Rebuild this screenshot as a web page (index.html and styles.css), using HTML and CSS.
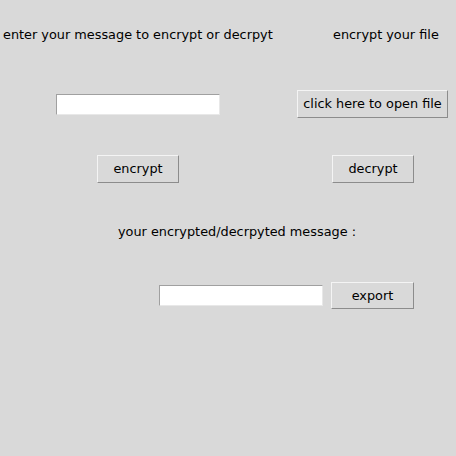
FILE: index.html
```html
<!DOCTYPE html>
<html>
<head>
<meta charset="utf-8">
<link rel="stylesheet" href="styles.css">
</head>
<body>
<div class="window">
  <div class="row row-labels">
    <span class="label label-msg">enter your message to encrypt or decrpyt</span>
    <span class="label label-file">encrypt your file</span>
  </div>
  <div class="row row-input">
    <input class="entry entry-msg" type="text">
    <button class="btn btn-open">click here to open file</button>
  </div>
  <div class="row row-actions">
    <button class="btn btn-small btn-encrypt">encrypt</button>
    <button class="btn btn-small btn-decrypt">decrypt</button>
  </div>
  <div class="row row-result-label">
    <span class="label label-result">your encrypted/decrpyted message :</span>
  </div>
  <div class="row row-output">
    <input class="entry entry-out" type="text">
    <button class="btn btn-small btn-export">export</button>
  </div>
</div>
</body>
</html>
```
FILE: styles.css
```css
html, body {
  margin: 0;
  padding: 0;
  background: #d9d9d9;
}
body {
  width: 456px;
  height: 456px;
  font-family: "DejaVu Sans", sans-serif;
  font-size: 12.85px;
  color: #000;
}
.window {
  padding-top: 27px;
}
.row {
  display: flex;
  align-items: center;
}
.label {
  line-height: 16px;
  white-space: nowrap;
}
.row-labels { height: 16px; }
.label-msg { width: 330px; padding-left: 3px; box-sizing: border-box; }
.label-file { margin-left: 3px; }

.row-input { margin-top: 47px; height: 28px; }
.entry {
  box-sizing: border-box;
  width: 164px;
  height: 21px;
  margin: 0;
  padding: 0 2px;
  background: #fff;
  border: 1px solid;
  border-color: #a0a0a0 #e8e8e8 #e8e8e8 #a0a0a0;
  font: inherit;
  outline: none;
}
.entry-msg { margin-left: 56px; }

.btn {
  box-sizing: border-box;
  height: 28px;
  margin: 0;
  padding: 0 0 1px;
  background: #d9d9d9;
  border: 1px solid;
  border-color: #f4f4f4 #8c8c8c #8c8c8c #f4f4f4;
  font: inherit;
  color: #000;
  text-align: center;
}
.btn-open { width: 151px; margin-left: 77px; }
.btn-small { width: 82px; }

.row-actions { margin-top: 37px; height: 28px; }
.btn-encrypt { margin-left: 97px; }
.btn-decrypt { margin-left: 153px; }

.row-result-label { margin-top: 41px; height: 16px; }
.label-result { margin-left: 118px; }

.row-output { margin-top: 42px; height: 27px; }
.entry-out { margin-left: 159px; }
.btn-export { margin-left: 8px; width: 83px; height: 27px; }
```
